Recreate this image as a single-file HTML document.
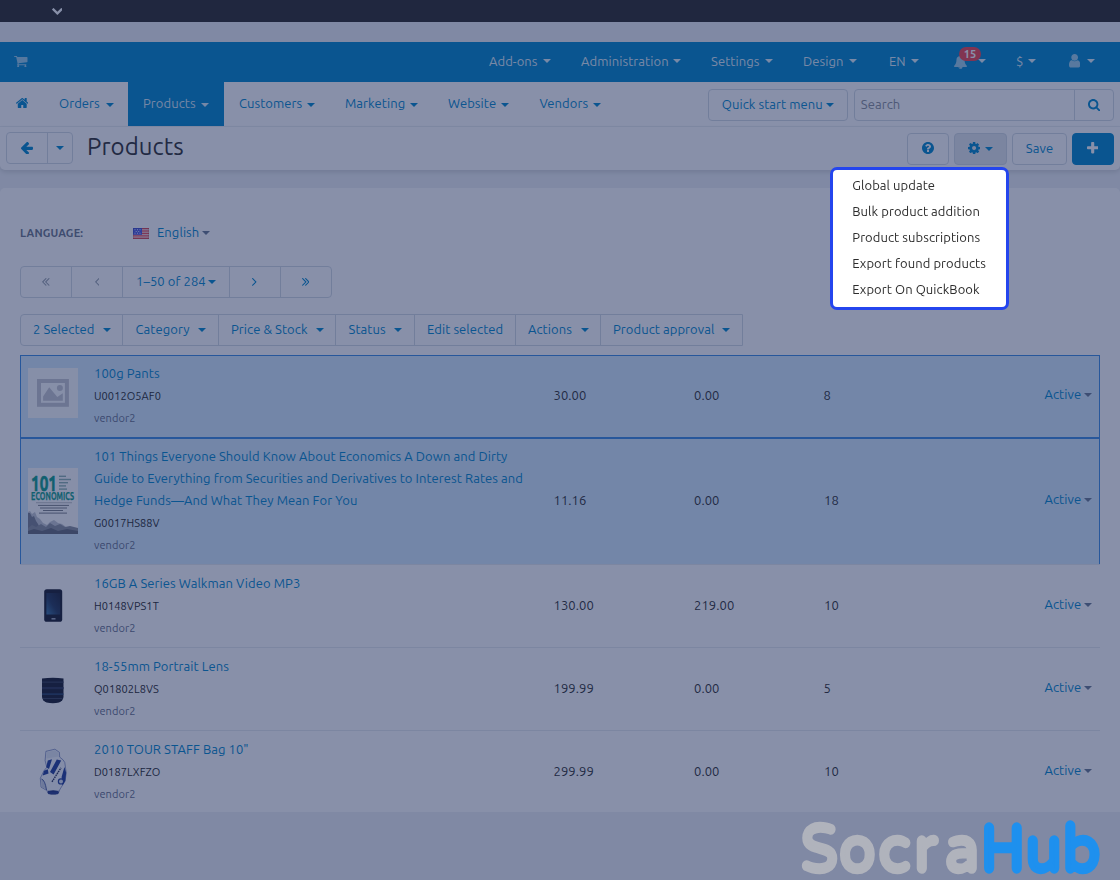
<!DOCTYPE html>
<html lang="en"><head><meta charset="utf-8"><title>Products</title>
<style>
*{box-sizing:border-box;margin:0;padding:0}
html,body{width:1120px;height:880px;overflow:hidden}
body{position:relative;background:#eef1f4;font-family:"Ubuntu","Liberation Sans",sans-serif;font-size:13px;line-height:18px;color:#333;letter-spacing:.07px}
.abs{position:absolute}
svg.ic{display:block;position:absolute}
.nw{white-space:nowrap}
/* top demo bar */
#demobar{left:0;top:0;width:1120px;height:22px;background:#2f2d2b}
/* top blue nav */
#topnav{left:0;top:42px;width:1120px;height:40px;background:#0388cc;color:rgba(255,255,255,.88)}
#topnav .it{position:absolute;top:0;height:40px;line-height:38px;white-space:nowrap}
.caret{position:absolute;width:0;height:0;border-left:4px solid transparent;border-right:4px solid transparent;border-top:4px solid currentColor}
/* second nav */
#subnav{left:0;top:82px;width:1120px;height:45px;background:#fff;color:#0388cc;border-bottom:1px solid #eef1f4}
#subnav .it{position:absolute;top:0;height:44px;line-height:42px;white-space:nowrap}
#subnav .act{position:absolute;left:128px;top:0;width:96px;height:44px;background:#0388cc}
.btn{position:absolute;border:1px solid #d3dbe2;border-radius:4px;background:#fff;color:#0388cc;white-space:nowrap}
/* title bar */
#titlebar{left:0;top:127px;width:1120px;height:43px;background:#fff;border-radius:0 0 5px 5px;box-shadow:0 2px 5px rgba(0,0,0,.13)}
#title{left:87px;top:4px;font-size:24px;line-height:32px;color:#333;white-space:nowrap}
/* content */
#content{left:0;top:188px;width:1120px;height:623.5px;background:#fff;border-radius:5px 5px 0 0}
/* overlay */
#overlay{left:0;top:0;width:1120px;height:880px;background:rgba(17,33,83,.5)}
/* dropdown */
#dd{left:830px;top:167px;width:179px;height:143px;background:#fff;border:3px solid #2445ee;border-radius:7px;color:#2d2d2d;will-change:transform}
#dd div{position:absolute;left:19.3px;white-space:nowrap;line-height:18px}
/* watermark */
#wm{left:780px;top:790px;font-family:"Varela Round","Liberation Sans",sans-serif;font-size:66px;stroke-width:5.4px;stroke-linejoin:round;stroke-linecap:round}
.badge{left:959px;top:4.6px;width:22px;height:14.4px;border-radius:7.2px;background:#f0474f;color:#fff;font-size:11px;font-weight:700;line-height:14px;text-align:center}
.lnk{color:#0388cc}
.t{line-height:22px}
.sku{font-size:11px;line-height:22px;color:#2a2a2a}
.ven{font-size:11px;line-height:22px;color:#67708a}
.grp{position:absolute;border:1px solid #d3dbe2;border-radius:4px;background:#fff;color:#0388cc}
.grp>b{position:absolute;top:0;width:1px;height:30px;background:#d3dbe2}
.row{position:absolute;left:20px;width:1080px;border-top:1px solid #e6eaee}
.row.sel{background:#d4ebfd;border:1px solid #3d8de2}
.caret.g{color:#6b7b93}

</style></head>
<body>
<div id="demobar" class="abs"><svg class="ic" width="10.80" height="6.93" viewBox="0 0 1611.5 1034.5" style="left:51.7px;top:7.8px;color:#fff"><path fill="currentColor" d="M1592.8 274.8C1617.8 249.8 1617.8 208.8 1592.8 183.8L1426.8 18.8C1401.8 -6.2 1361.8 -6.2 1336.8 18.8L805.8 549.8L274.8 18.8C249.8 -6.2 209.8 -6.2 184.8 18.8L18.8 183.8C-6.2 208.8 -6.2 249.8 18.8 274.8L760.8 1015.8C785.8 1040.8 825.8 1040.8 850.8 1015.8L1592.8 274.8Z"/></svg></div>

<div id="topnav" class="abs">
  <svg class="ic" width="13.50" height="11.42" viewBox="0 0 1664.0 1408.0" style="left:14.4px;top:13.5px;opacity:.68"><path fill="currentColor" d="M640 1280C640 1210 582 1152 512 1152C442 1152 384 1210 384 1280C384 1350 442 1408 512 1408C582 1408 640 1350 640 1280ZM1536 1280C1536 1210 1478 1152 1408 1152C1338 1152 1280 1210 1280 1280C1280 1350 1338 1408 1408 1408C1478 1408 1536 1350 1536 1280ZM1664 192C1664 157 1635 128 1600 128H399C389 80 387 0 320 0H64C29 0 0 29 0 64C0 99 29 128 64 128H268L445 951C429 982 384 1057 384 1088C384 1123 413 1152 448 1152H1472C1507 1152 1536 1123 1536 1088C1536 1053 1507 1024 1472 1024H552C562 1004 576 983 576 960C576 936 568 913 563 890L1607 768C1639 764 1664 736 1664 704Z"/></svg>
  <div class="it" style="left:489px">Add-ons<i class="caret" style="left:54px;top:17px"></i></div>
  <div class="it" style="left:581px">Administration<i class="caret" style="left:92px;top:17px"></i></div>
  <div class="it" style="left:711px">Settings<i class="caret" style="left:54px;top:17px"></i></div>
  <div class="it" style="left:803px">Design<i class="caret" style="left:46px;top:17px"></i></div>
  <div class="it" style="left:889px">EN<i class="caret" style="left:22px;top:17px"></i></div>
  <svg class="ic" width="13.00" height="14.00" viewBox="0 0 1664.0 1792.0" style="left:954px;top:13px;opacity:.7"><path fill="currentColor" d="M848 1696C848 1705 841 1712 832 1712C735 1712 656 1633 656 1536C656 1527 663 1520 672 1520C681 1520 688 1527 688 1536C688 1615 753 1680 832 1680C841 1680 848 1687 848 1696ZM1664 1408C1516 1283 1344 1059 1344 576C1344 384 1185 174 920 135C925 123 928 110 928 96C928 43 885 0 832 0C779 0 736 43 736 96C736 110 739 123 744 135C479 174 320 384 320 576C320 1059 148 1283 0 1408C0 1478 58 1536 128 1536H576C576 1677 691 1792 832 1792C973 1792 1088 1677 1088 1536H1536C1606 1536 1664 1478 1664 1408Z"/></svg>
  <i class="caret" style="left:978px;top:17px"></i>
  <div class="badge abs">15</div>
  <div class="it" style="left:1016px">$<i class="caret" style="left:12px;top:17px"></i></div>
  <svg class="ic" width="11.30" height="13.56" viewBox="0 0 1280.0 1536.0" style="left:1069.2px;top:12.4px;opacity:.7"><path fill="currentColor" d="M1280 1271C1280 1008 1215 704 953 704C872 783 762 832 640 832C518 832 408 783 327 704C65 704 0 1008 0 1271C0 1417 96 1536 213 1536H1067C1184 1536 1280 1417 1280 1271ZM1024 384C1024 172 852 0 640 0C428 0 256 172 256 384C256 596 428 768 640 768C852 768 1024 596 1024 384Z"/></svg>
  <i class="caret" style="left:1087px;top:17px"></i>
</div>

<div id="subnav" class="abs">
  <div class="act"></div>
  <svg class="ic" width="12.50" height="9.95" viewBox="0 0 1612.3 1283.2" style="left:15.5px;top:16px"><path fill="currentColor" d="M1382.1 739.2C1382.1 737.2 1382.1 735.2 1381.1 733.2L806.1 259.2L231.1 733.2C231.1 735.2 230.1 737.2 230.1 739.2V1219.2C230.1 1254.2 259.1 1283.2 294.1 1283.2H678.1V899.2H934.1V1283.2H1318.1C1353.1 1283.2 1382.1 1254.2 1382.1 1219.2ZM1605.1 670.2C1616.1 657.2 1614.1 636.2 1601.1 625.2L1382.1 443.2V35.2C1382.1 17.2 1368.1 3.2 1350.1 3.2H1158.1C1140.1 3.2 1126.1 17.2 1126.1 35.2V230.2L882.1 26.2C840.1 -8.8 772.1 -8.8 730.1 26.2L11.1 625.2C-1.9 636.2 -3.9 657.2 7.1 670.2L69.1 744.2C74.1 750.2 82.1 754.2 90.1 755.2C99.1 756.2 107.1 753.2 114.1 748.2L806.1 171.2L1498.1 748.2C1504.1 753.2 1511.1 755.2 1519.1 755.2C1520.1 755.2 1521.1 755.2 1522.1 755.2C1530.1 754.2 1538.1 750.2 1543.1 744.2L1605.1 670.2Z"/></svg>
  <div class="it" style="left:59px">Orders<i class="caret" style="left:47px;top:21px"></i></div>
  <div class="it" style="left:143px;color:rgba(255,255,255,.85)">Products<i class="caret" style="left:58px;top:21px"></i></div>
  <div class="it" style="left:239px">Customers<i class="caret" style="left:68px;top:21px"></i></div>
  <div class="it" style="left:345px">Marketing<i class="caret" style="left:65px;top:21px"></i></div>
  <div class="it" style="left:448px">Website<i class="caret" style="left:53px;top:21px"></i></div>
  <div class="it" style="left:539.5px">Vendors<i class="caret" style="left:53.5px;top:21px"></i></div>
  <div class="btn" style="left:708px;top:7px;width:140px;height:32px;line-height:28.6px;padding-left:12.8px">Quick start menu<i class="caret" style="left:117.2px;top:12.6px"></i></div>
  <div class="btn" style="left:854px;top:7px;width:260px;height:32px;line-height:28.6px;padding-left:5.8px;color:#8a919a">Search
    <div class="abs" style="left:218.5px;top:0;width:1px;height:30px;background:#d3dbe2"></div>
    <svg class="ic" width="12.30" height="12.30" viewBox="0 0 1664.0 1664.0" style="left:232.6px;top:8.8px;color:#0388cc"><path fill="currentColor" d="M1152 704C1152 951 951 1152 704 1152C457 1152 256 951 256 704C256 457 457 256 704 256C951 256 1152 457 1152 704ZM1664 1536C1664 1502 1650 1469 1627 1446L1284 1103C1365 986 1408 846 1408 704C1408 315 1093 0 704 0C315 0 0 315 0 704C0 1093 315 1408 704 1408C846 1408 986 1365 1103 1284L1446 1626C1469 1650 1502 1664 1536 1664C1606 1664 1664 1606 1664 1536Z"/></svg>
  </div>
</div>

<div id="titlebar" class="abs">
  <div class="btn" style="left:6px;top:5px;width:67px;height:32px">
    <div class="abs" style="left:40px;top:0;width:1px;height:30px;background:#d3dbe2"></div>
    <svg class="ic" width="12.00" height="12.70" viewBox="0 0 1472.0 1558.0" style="left:13.8px;top:8.5px"><path fill="currentColor" d="M1472 715C1472 647 1427 587 1355 587H651L944 294C968 270 982 237 982 203C982 169 968 136 944 112L869 38C845 14 813 0 779 0C745 0 712 14 688 38L37 688C14 712 0 745 0 779C0 813 14 846 37 869L688 1521C712 1544 745 1558 779 1558C813 1558 846 1544 869 1521L944 1445C968 1422 982 1389 982 1355C982 1321 968 1288 944 1265L651 971H1355C1427 971 1472 911 1472 843Z"/></svg>
    <i class="caret" style="left:49px;top:13px"></i>
  </div>
  <div id="title" class="abs">Products</div>
  <div class="btn" style="left:907px;top:6px;width:42px;height:32px"><svg class="ic" width="12.00" height="12.00" viewBox="0 0 1536.0 1536.0" style="left:14px;top:8px"><path fill="currentColor" d="M896 1248C896 1266 882 1280 864 1280H672C654 1280 640 1266 640 1248V1056C640 1038 654 1024 672 1024H864C882 1024 896 1038 896 1056V1248ZM1152 576C1152 728 1048 786 972 829C925 856 896 905 896 928C896 946 882 960 864 960H672C654 960 640 946 640 928V892C640 795 737 712 808 680C869 652 896 626 896 574C896 530 837 489 773 489C737 489 704 501 687 513C668 527 648 545 601 605C595 613 585 617 576 617C569 617 562 615 557 611L425 511C412 501 408 483 417 469C503 326 625 256 788 256C960 256 1152 393 1152 576ZM1536 768C1536 344 1192 0 768 0C344 0 0 344 0 768C0 1192 344 1536 768 1536C1192 1536 1536 1192 1536 768Z"/></svg></div>
  <div class="btn" style="left:954px;top:6px;width:53px;height:32px;background:#e4e8ec"><svg class="ic" width="12.20" height="12.20" viewBox="0 0 1536.0 1536.0" style="left:13.3px;top:8px"><path fill="currentColor" d="M1024 768C1024 909 909 1024 768 1024C627 1024 512 909 512 768C512 627 627 512 768 512C909 512 1024 627 1024 768ZM1536 659C1536 642 1524 626 1507 623L1324 595C1314 562 1300 529 1283 497C1317 450 1354 406 1388 360C1393 353 1396 346 1396 337C1396 329 1394 321 1389 315C1347 256 1277 194 1224 145C1217 139 1208 135 1199 135C1190 135 1181 138 1175 144L1033 251C1004 236 974 224 943 214L915 30C913 13 897 0 879 0H657C639 0 625 12 621 28C605 88 599 153 592 214C561 224 530 237 501 252L363 145C355 139 346 135 337 135C303 135 168 281 144 314C139 321 135 328 135 337C135 346 139 354 145 361C182 406 218 451 252 499C236 529 223 559 213 591L27 619C12 622 0 640 0 655V877C0 894 12 910 29 913L212 940C222 974 236 1007 253 1039C219 1086 182 1130 148 1176C143 1183 140 1190 140 1199C140 1207 142 1215 147 1222C189 1280 259 1342 312 1390C319 1397 328 1401 337 1401C346 1401 355 1398 362 1392L503 1285C532 1300 562 1312 593 1322L621 1506C623 1523 639 1536 657 1536H879C897 1536 911 1524 915 1508C931 1448 937 1383 944 1322C975 1312 1006 1299 1035 1284L1173 1392C1181 1397 1190 1401 1199 1401C1233 1401 1368 1254 1392 1222C1398 1215 1401 1208 1401 1199C1401 1190 1397 1181 1391 1174C1354 1129 1318 1085 1284 1036C1300 1007 1312 977 1323 945L1508 917C1524 914 1536 896 1536 881Z"/></svg><i class="caret" style="left:30px;top:13px"></i></div>
  <div class="btn" style="left:1012px;top:6px;width:55px;height:32px;line-height:28px;text-align:center">Save</div>
  <div class="btn" style="left:1072px;top:6px;width:42px;height:32px;background:#0388cc;border-color:#0388cc;color:#fff"><svg class="ic" width="11.40" height="11.40" viewBox="0 0 1408.0 1408.0" style="left:14px;top:8.3px"><path fill="currentColor" d="M1408 608C1408 555 1365 512 1312 512H896V96C896 43 853 0 800 0H608C555 0 512 43 512 96V512H96C43 512 0 555 0 608V800C0 853 43 896 96 896H512V1312C512 1365 555 1408 608 1408H800C853 1408 896 1365 896 1312V896H1312C1365 896 1408 853 1408 800Z"/></svg></div>
</div>

<div id="content" class="abs"></div>
<div id="page" class="abs" style="left:0;top:0;width:1120px;height:811px;overflow:hidden">
  <div class="abs nw" style="left:20px;top:224px;font-size:11px;font-weight:700;color:#6c778b;letter-spacing:.15px">LANGUAGE:</div>
  <svg class="abs" style="left:133px;top:228px" width="16" height="11" viewBox="0 0 16 11"><rect width="16" height="11" fill="#f7f2f4"/><g fill="#ea3a4a"><rect y="0" width="16" height=".9"/><rect y="1.7" width="16" height=".9"/><rect y="3.4" width="16" height=".9"/><rect y="5.1" width="16" height=".9"/><rect y="6.8" width="16" height=".9"/><rect y="8.5" width="16" height=".9"/><rect y="10.1" width="16" height=".9"/></g><rect width="9" height="6.8" fill="#4a56e0"/><g fill="#dfe3ff"><rect x="1.5" y="1.2" width="1" height="1"/><rect x="4" y="1.2" width="1" height="1"/><rect x="6.5" y="1.2" width="1" height="1"/><rect x="2.7" y="3" width="1" height="1"/><rect x="5.2" y="3" width="1" height="1"/><rect x="1.5" y="4.7" width="1" height="1"/><rect x="4" y="4.7" width="1" height="1"/><rect x="6.5" y="4.7" width="1" height="1"/></g><rect x=".25" y=".25" width="15.5" height="10.5" fill="none" stroke="#000" stroke-opacity=".18" stroke-width=".5"/></svg>
  <div class="abs nw lnk" style="left:157px;top:223px">English<i class="caret" style="left:44.5px;top:8px;color:#6b7b93"></i></div>

  <div class="grp" style="left:20px;top:266px;width:312px;height:32px">
    <b style="left:50px"></b><b style="left:101px"></b><b style="left:208px"></b><b style="left:259px"></b>
    <svg class="ic" width="7.60" height="7.85" viewBox="0 0 966.0 998.0" style="left:21.3px;top:11px;color:#9aa3ad"><path fill="currentColor" d="M582 915C582 907 578 898 572 892L179 499L572 106C578 100 582 91 582 83C582 75 578 66 572 60L522 10C516 4 507 0 499 0C491 0 482 4 476 10L10 476C4 482 0 491 0 499C0 507 4 516 10 522L476 988C482 994 491 998 499 998C507 998 516 994 522 988L572 938C578 932 582 923 582 915ZM966 915C966 907 962 898 956 892L563 499L956 106C962 100 966 91 966 83C966 75 962 66 956 60L906 10C900 4 891 0 883 0C875 0 866 4 860 10L394 476C388 482 384 491 384 499C384 507 388 516 394 522L860 988C866 994 875 998 883 998C891 998 900 994 906 988L956 938C962 932 966 923 966 915Z"/></svg>
    <svg class="ic" width="4.60" height="7.89" viewBox="0 0 582.0 998.0" style="left:73.5px;top:11px;color:#9aa3ad"><path fill="currentColor" d="M582 83C582 74 578 66 572 60L522 10C516 4 507 0 499 0C491 0 482 4 476 10L10 476C4 482 0 491 0 499C0 507 4 516 10 522L476 988C482 994 491 998 499 998C507 998 516 994 522 988L572 938C578 932 582 923 582 915C582 907 578 898 572 892L179 499L572 106C578 100 582 91 582 83Z"/></svg>
    <div class="abs nw" style="left:115px;top:5px">1–50 of 284<i class="caret" style="left:71.5px;top:8px"></i></div>
    <svg class="ic" width="4.60" height="7.89" viewBox="0 0 582.0 998.0" style="left:231px;top:11px"><path fill="currentColor" d="M582 499C582 491 578 482 572 476L106 10C100 4 91 0 83 0C75 0 66 4 60 10L10 60C4 66 0 75 0 83C0 91 4 100 10 106L403 499L10 892C4 898 0 907 0 915C0 924 4 932 10 938L60 988C66 994 75 998 83 998C91 998 100 994 106 988L572 522C578 516 582 507 582 499Z"/></svg>
    <svg class="ic" width="7.60" height="7.85" viewBox="0 0 966.0 998.0" style="left:280.8px;top:11px"><path fill="currentColor" d="M582 499C582 491 578 482 572 476L106 10C100 4 91 0 83 0C75 0 66 4 60 10L10 60C4 66 0 75 0 83C0 91 4 100 10 106L403 499L10 892C4 898 0 907 0 915C0 923 4 932 10 938L60 988C66 994 75 998 83 998C91 998 100 994 106 988L572 522C578 516 582 507 582 499ZM966 499C966 491 962 482 956 476L490 10C484 4 475 0 467 0C459 0 450 4 444 10L394 60C388 66 384 75 384 83C384 91 388 100 394 106L787 499L394 892C388 898 384 907 384 915C384 923 388 932 394 938L444 988C450 994 459 998 467 998C475 998 484 994 490 988L956 522C962 516 966 507 966 499Z"/></svg>
  </div>

  <div class="grp" style="left:20px;top:314px;width:723px;height:32px;border-radius:4px 0 0 4px">
    <b style="left:101px"></b><b style="left:197px"></b><b style="left:314px"></b><b style="left:393px"></b><b style="left:494px"></b><b style="left:579px"></b>
    <div class="abs nw" style="left:12px;top:5px">2 Selected<i class="caret" style="left:69.5px;top:8px"></i></div>
    <div class="abs nw" style="left:114.5px;top:5px">Category<i class="caret" style="left:62.5px;top:8px"></i></div>
    <div class="abs nw" style="left:210px;top:5px">Price &amp; Stock<i class="caret" style="left:84.5px;top:8px"></i></div>
    <div class="abs nw" style="left:327.5px;top:5px">Status<i class="caret" style="left:45.5px;top:8px"></i></div>
    <div class="abs nw" style="left:406px;top:5px">Edit selected</div>
    <div class="abs nw" style="left:507px;top:5px">Actions<i class="caret" style="left:52.5px;top:8px"></i></div>
    <div class="abs nw" style="left:592px;top:5px">Product approval<i class="caret" style="left:108.5px;top:8px"></i></div>
  </div>

  <!-- rows -->
  <div class="row sel" style="top:355px;height:83px"></div>
  <div class="row sel" style="top:437px;height:127px;border-bottom:0;border-top-width:2px"></div>
  <div class="row" style="top:564px;height:83px"></div>
  <div class="row" style="top:647px;height:83px"></div>
  <div class="row" style="top:730px;height:83px"></div>

  <!-- row 1 -->
  <div class="abs" style="left:28.2px;top:368.3px;width:49.5px;height:49.5px;background:#fbfcfd"><svg class="abs" style="left:-.2px;top:-.3px" width="50" height="50" viewBox="0 0 50 50"><rect x="11" y="13" width="27.9" height="23.8" fill="none" stroke="#c7c8d0" stroke-width="4"/><path d="M15.1 28.6L21.2 19.3L29.3 29.1L34.8 25.2V32.8H15.1z" fill="#c7c8d0"/><circle cx="31.9" cy="19.9" r="3" fill="#c7c8d0"/></svg></div>
  <div class="abs nw lnk t" style="left:94px;top:362px">100g Pants</div>
  <div class="abs nw sku" style="left:94px;top:385px">U0012O5AF0</div>
  <div class="abs nw ven" style="left:94px;top:407px">vendor2</div>
  <div class="abs nw t" style="left:553.5px;top:384px">30.00</div>
  <div class="abs nw t" style="left:694px;top:384px">0.00</div>
  <div class="abs nw t" style="left:823.5px;top:384px">8</div>
  <div class="abs nw lnk t" style="left:1044.5px;top:383px">Active<i class="caret g" style="left:39.3px;top:10px"></i></div>

  <!-- row 2 -->
  <svg class="abs" style="left:28px;top:468px" width="50" height="66" viewBox="0 0 50 66" font-family="Ubuntu,'Liberation Sans',sans-serif" font-weight="700"><rect width="50" height="66" fill="#fcfcfd"/><text x="3" y="22.6" font-size="22" fill="#0e9d8a" stroke="#0e9d8a" stroke-width=".7" textLength="26" lengthAdjust="spacingAndGlyphs">101</text><text x="3.1" y="31.9" font-size="10" fill="#0e9d8a" stroke="#0e9d8a" stroke-width=".25" textLength="43" lengthAdjust="spacingAndGlyphs">ECONOMICS</text><g fill="#8fb3b0"><rect x="31" y="7.6" width="7" height="1.4"/><rect x="31" y="10.8" width="12" height="1.4"/><rect x="31" y="14" width="9" height="1.4"/><rect x="31" y="17.2" width="7" height="1.4"/><rect x="31" y="20.4" width="8" height="1.4"/></g><g fill="#7d8088"><rect x="8" y="34.3" width="36" height=".9" opacity=".5"/><rect x="10" y="36.9" width="31" height="1"/><rect x="12" y="39.5" width="27" height="1"/><rect x="15" y="42" width="20" height="1"/><rect x="11" y="44.6" width="28" height="1"/></g><path d="M0 44l2-1 2 3 3-2 2 5 3 2 3 4 4 2 3-3 4-2 4 3 4 1 4 3 5 2 4-1v6H0z" fill="#c3c7d0"/><path d="M0 45l2 0 2 4 2-1 2 5 2 3 2 4 2 3H0z" fill="#7b8190"/><path d="M0 60l4-3 4 2 5-3 5 3 4-4 5 3 5-2 5 3 5-1 8 2v6H0z" fill="#8b909d"/><path d="M0 63l6-2 8 2 9-3 7 3 9-2 11 2v3H0z" fill="#666c7a"/></svg>
  <div class="abs lnk t" style="left:94px;top:445px;width:440px">101 Things Everyone Should Know About Economics A Down and Dirty<br>Guide to Everything from Securities and Derivatives to Interest Rates and<br>Hedge Funds—And What They Mean For You</div>
  <div class="abs nw sku" style="left:94px;top:512px">G0017HS88V</div>
  <div class="abs nw ven" style="left:94px;top:534px">vendor2</div>
  <div class="abs nw t" style="left:553.5px;top:489px">11.16</div>
  <div class="abs nw t" style="left:694px;top:489px">0.00</div>
  <div class="abs nw t" style="left:824px;top:489px">18</div>
  <div class="abs nw lnk t" style="left:1044.5px;top:488px">Active<i class="caret g" style="left:39.3px;top:10px"></i></div>

  <!-- row 3 -->
  <svg class="abs" style="left:43px;top:588px" width="21" height="36" viewBox="0 0 21 36"><defs><linearGradient id="wk" x1="1" y1="0" x2="0" y2="1"><stop offset="0" stop-color="#1d2336"/><stop offset=".55" stop-color="#263a5c"/><stop offset="1" stop-color="#3d78a8"/></linearGradient></defs><rect x="1.2" y="1.2" width="18" height="32.6" rx="2.6" fill="#1a1e2e"/><rect x="3.4" y="5" width="13.8" height="21.5" fill="url(#wk)"/><rect x="8.5" y="30" width="4" height="1.6" fill="#9aa3b5"/></svg>
  <div class="abs nw lnk t" style="left:94px;top:572px">16GB A Series Walkman Video MP3</div>
  <div class="abs nw sku" style="left:94px;top:595px">H0148VPS1T</div>
  <div class="abs nw ven" style="left:94px;top:617px">vendor2</div>
  <div class="abs nw t" style="left:553.5px;top:594px">130.00</div>
  <div class="abs nw t" style="left:694px;top:594px">219.00</div>
  <div class="abs nw t" style="left:824px;top:594px">10</div>
  <div class="abs nw lnk t" style="left:1044.5px;top:593px">Active<i class="caret g" style="left:39.3px;top:10px"></i></div>

  <!-- row 4 -->
  <svg class="abs" style="left:41px;top:677px" width="24" height="28" viewBox="0 0 24 28"><path d="M1 1.5Q12 0 22.5 1.5V20Q22 24 18 25.5Q12 27 5.5 25.5Q1.5 24 1 20z" fill="#1a1f2f"/><rect x="1" y="4.5" width="21.5" height="1.3" fill="#343c52"/><rect x="1" y="10" width="21.5" height="2.2" fill="#2c3550"/><rect x="1" y="16.5" width="21.5" height="1.2" fill="#30507a"/><rect x="2" y="21" width="19.5" height="1" fill="#3a4258"/></svg>
  <div class="abs nw lnk t" style="left:94px;top:655px">18-55mm Portrait Lens</div>
  <div class="abs nw sku" style="left:94px;top:678px">Q01802L8VS</div>
  <div class="abs nw ven" style="left:94px;top:700px">vendor2</div>
  <div class="abs nw t" style="left:553.5px;top:677px">199.99</div>
  <div class="abs nw t" style="left:694px;top:677px">0.00</div>
  <div class="abs nw t" style="left:823.5px;top:677px">5</div>
  <div class="abs nw lnk t" style="left:1044.5px;top:676px">Active<i class="caret g" style="left:39.3px;top:10px"></i></div>

  <!-- row 5 -->
  <svg class="abs" style="left:28px;top:740px" width="50" height="60" viewBox="0 0 50 60"><path d="M17.9 11.3L26.9 9.2L31.4 12.3L31.7 17.1Q36 20 36.8 22.5L38.2 32.7L37.2 40.9L32.1 49.1L30 53.9H20.5L18.8 50.5L13 47.1L12.3 38.2L16 30.7L18.8 27.3L17.1 20.5z" fill="#f6f8fc" stroke="#3a4f9c" stroke-width=".7" stroke-opacity=".75"/><path d="M18.3 12.2L26.8 10.2L30.6 12.9L30.8 16.6L18.6 18.6z" fill="#e3e8f3"/><path d="M19.8 20.5L24 19.2L21 29L18.2 27.3zM28.8 19.6L33.2 20.6L25.6 34.6L22 32zM16 30.7L19.8 29.3L20.5 33.4L14.7 35.5zM36.4 27L38.2 32.7L37.2 40.9L34.4 45.5L33.6 37z" fill="#24409a"/><path d="M13.2 38.5Q16.5 39.5 18.3 49.5L13.5 46.8z" fill="#c9d0e2"/><ellipse cx="25.2" cy="52.4" rx="5.6" ry="2.2" fill="#1f3278"/><path d="M19.6 50.6Q25 53 30.6 50.4L30 53.9H20.5z" fill="#2a3f8c"/><circle cx="33" cy="41.4" r="2.6" fill="#dfe5f3" stroke="#24409a" stroke-width="1.2"/><path d="M24 41.8L33 27.8" stroke="#2b335a" stroke-width="1.4" stroke-dasharray="1.6 .7"/><path d="M13.5 39Q17 40 18.5 50" fill="none" stroke="#2a3f8c" stroke-width=".8"/></svg>
  <div class="abs nw lnk t" style="left:94px;top:738px">2010 TOUR STAFF Bag 10"</div>
  <div class="abs nw sku" style="left:94px;top:761px">D0187LXFZO</div>
  <div class="abs nw ven" style="left:94px;top:783px">vendor2</div>
  <div class="abs nw t" style="left:553.5px;top:760px">299.99</div>
  <div class="abs nw t" style="left:694px;top:760px">0.00</div>
  <div class="abs nw t" style="left:824px;top:760px">10</div>
  <div class="abs nw lnk t" style="left:1044.5px;top:759px">Active<i class="caret g" style="left:39.3px;top:10px"></i></div>
</div>

<div id="overlay" class="abs"></div>
<div id="dd" class="abs">
<div style="top:6px">Global update</div>
<div style="top:32px">Bulk product addition</div>
<div style="top:58px">Product subscriptions</div>
<div style="top:84px">Export found products</div>
<div style="top:110px">Export On QuickBook</div>
</div>
<svg id="wm" class="abs" width="340" height="90" viewBox="0 0 340 90"><g transform="scale(.89,1)"><text x="23.9 66.91 111.08 151.05 186.26 225.53 276.25 318.04" y="81.27" fill="#b0b3bc" stroke="#b0b3bc">Socra<tspan fill="#1e90ee" stroke="#1e90ee">Hub</tspan></text></g></svg>

</body></html>
